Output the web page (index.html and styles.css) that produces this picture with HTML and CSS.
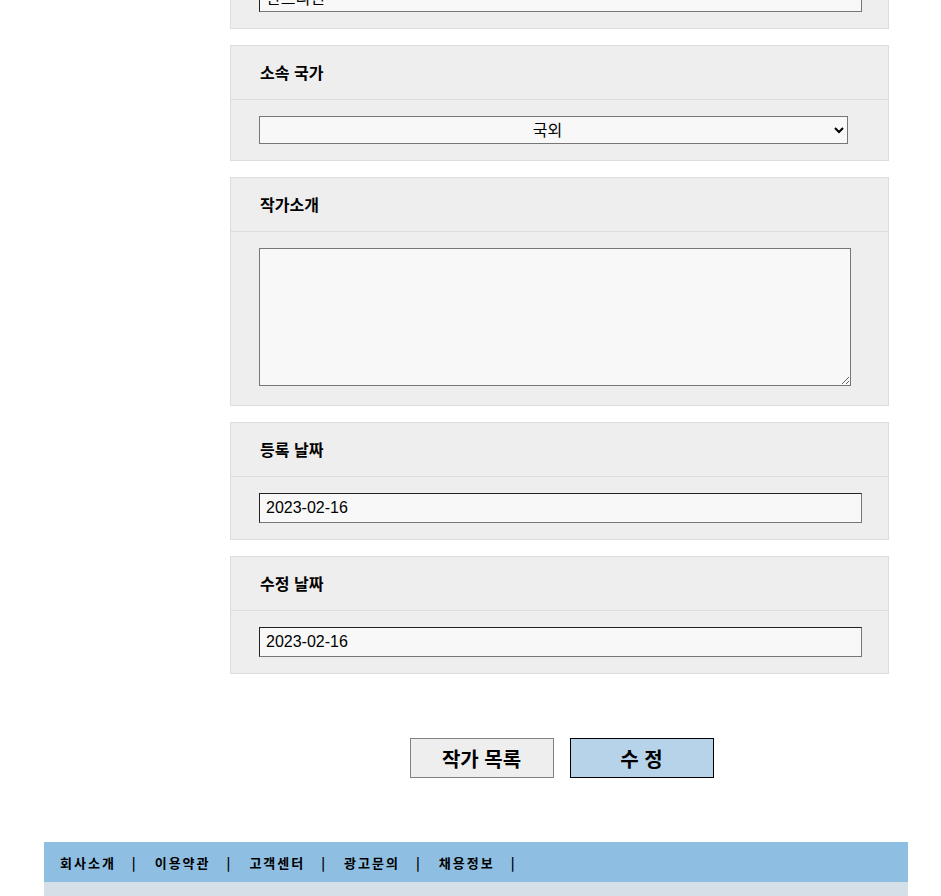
FILE: index.html
```html
<!DOCTYPE html>
<html lang="ko">

<head>
    <meta charset="UTF-8">
    <meta name="viewport" content="width=device-width, initial-scale=1.0">
    <title>작가 수정</title>
    <link rel="stylesheet" href="styles.css">
</head>

<body>
    <div class="content">
        <form class="edit-form">
            <!-- 작가명 -->
            <div class="field-box first">
                <div class="field-title">작가명</div>
                <div class="field-body">
                    <input type="text" class="text-input" value="한스리빈">
                </div>
            </div>

            <!-- 소속 국가 -->
            <div class="field-box">
                <div class="field-title">소속 국가</div>
                <div class="field-body">
                    <select class="select-input">
                        <option value="domestic">국내</option>
                        <option value="foreign" selected>국외</option>
                    </select>
                </div>
            </div>

            <!-- 작가소개 -->
            <div class="field-box">
                <div class="field-title">작가소개</div>
                <div class="field-body">
                    <textarea class="area-input"></textarea>
                </div>
            </div>

            <!-- 등록 날짜 -->
            <div class="field-box">
                <div class="field-title">등록 날짜</div>
                <div class="field-body">
                    <input type="text" class="text-input" value="2023-02-16" readonly>
                </div>
            </div>

            <!-- 수정 날짜 -->
            <div class="field-box">
                <div class="field-title">수정 날짜</div>
                <div class="field-body">
                    <input type="text" class="text-input" value="2023-02-16" readonly>
                </div>
            </div>

            <div class="btn-area">
                <button type="button" class="btn btn-list">작가 목록</button>
                <button type="submit" class="btn btn-submit">수 정</button>
            </div>
        </form>
    </div>

    <footer class="footer">
        <ul class="footer-menu">
            <li>회사소개</li>
            <li>이용약관</li>
            <li>고객센터</li>
            <li>광고문의</li>
            <li>채용정보</li>
        </ul>
        <div class="footer-bottom"></div>
    </footer>
</body>

</html>
```

FILE: styles.css
```css
body {
    margin: 0;
    font-family: "Liberation Sans", "Noto Sans CJK KR", sans-serif;
    background: #fff;
    color: #000;
}

.content {
    margin-left: 230px;
    width: 659px;
}

/* 입력 박스 */
.field-box {
    background: #eeeeee;
    border: 1px solid #dddddd;
    margin-bottom: 16px;
}

.field-box.first {
    margin-top: -89px;
}

.field-title {
    height: 53px;
    line-height: 53px;
    padding: 0 29px;
    border-bottom: 1px solid #dddddd;
    font-family: "Noto Sans CJK KR", sans-serif;
    font-size: 16px;
    font-weight: bold;
}

.field-body {
    padding: 16px 28px;
}

.text-input,
.select-input,
.area-input {
    display: block;
    box-sizing: border-box;
    background: #f8f8f8;
    border: 1px solid #767676;
    font-family: "Liberation Sans", "Noto Sans CJK KR", sans-serif;
    font-size: 16px;
    color: #000;
    margin: 0;
}

.text-input {
    width: 603px;
    height: 30px;
    padding: 0 6px;
    border-top-color: #222;
    border-left-color: #222;
}

.select-input {
    width: 589px;
    height: 28px;
    text-align: center;
    text-align-last: center;
    border-radius: 0;
}

.area-input {
    width: 592px;
    height: 138px;
    margin-bottom: 3px;
    resize: vertical;
}

/* 버튼 */
.btn-area {
    display: flex;
    justify-content: center;
    gap: 16px;
    margin: 64px 0 64px 4px;
}

.btn {
    width: 144px;
    height: 40px;
    font-family: "Noto Sans CJK KR", sans-serif;
    font-size: 20px;
    font-weight: bold;
    cursor: pointer;
    padding: 0;
}

.btn-list {
    background: #eeeeee;
    border: 1px solid #808080;
}

.btn-submit {
    background: #b7d3e9;
    border: 1px solid #000;
}

/* 푸터 */
.footer {
    margin-left: 44px;
    width: 864px;
}

.footer-menu {
    list-style: none;
    margin: 0;
    padding: 0 0 0 16px;
    height: 40px;
    display: flex;
    align-items: center;
    background: #8ebfe3;
}

.footer-menu li {
    font-family: "Noto Sans CJK KR", sans-serif;
    font-size: 13px;
    font-weight: bold;
    letter-spacing: 2px;
}

.footer-menu li::after {
    content: "|";
    margin: 0 17px 0 16px;
}

.footer-bottom {
    height: 40px;
    background: #d4dfe7;
}
```
